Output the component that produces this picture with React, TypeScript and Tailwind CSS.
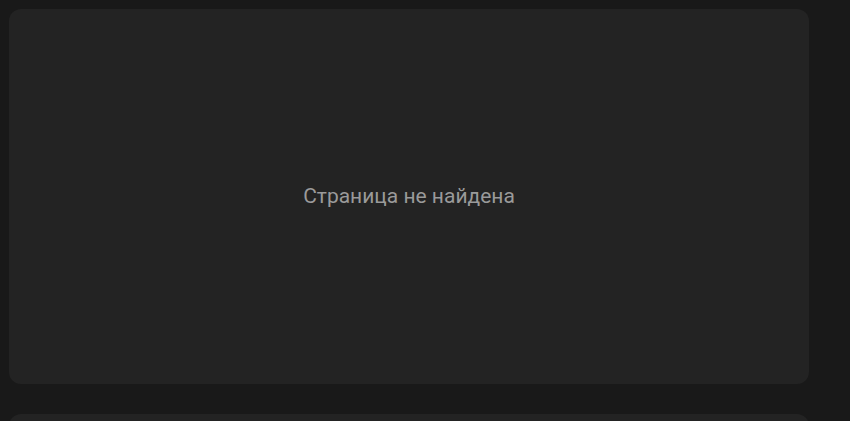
export default function App() {
  return (
    <div className="min-h-screen bg-[#191919] pl-[9px] pt-[9px] font-['Roboto',sans-serif]">
      <div className="flex w-[800px] flex-col gap-[30px]">
        <section className="flex h-[375px] items-center justify-center rounded-xl bg-[#232323]">
          <p className="text-[21px] text-[#9a9a9a]">Страница не найдена</p>
        </section>
        <section className="h-[200px] rounded-xl bg-[#232323]" />
      </div>
    </div>
  );
}
